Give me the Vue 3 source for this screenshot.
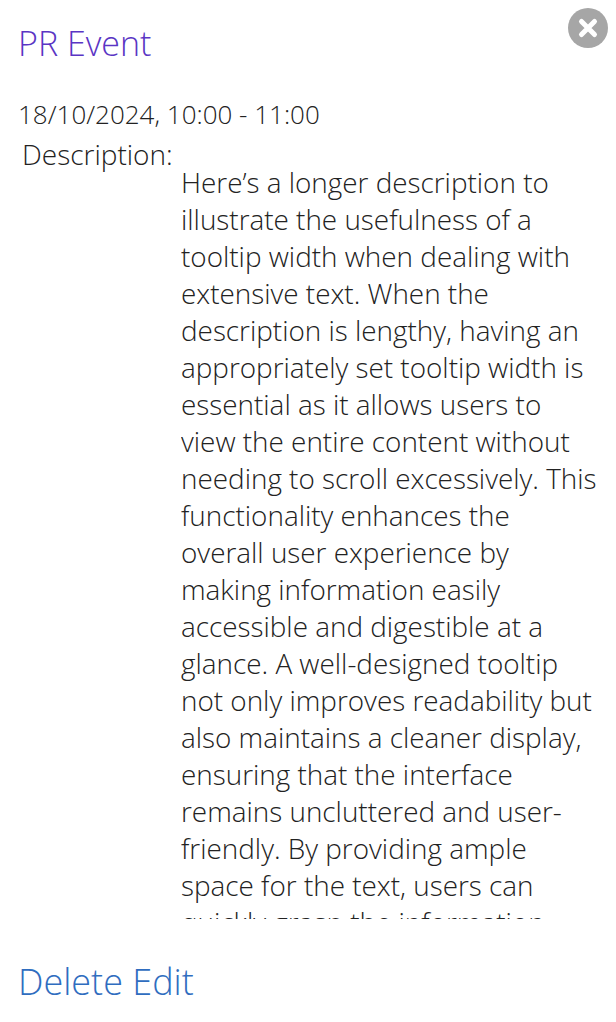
<template>
  <div class="popup">
    <button class="close" aria-label="Close">
      <svg viewBox="0 0 40 40" width="40" height="40">
        <circle cx="20" cy="20" r="20" fill="#a6a6a6" />
        <path d="M13.5 13.5 L26.5 26.5 M26.5 13.5 L13.5 26.5" stroke="#fff" stroke-width="5" stroke-linecap="round" />
      </svg>
    </button>
    <h2 class="title">{{ title }}</h2>
    <div class="when">{{ when }}</div>
    <div class="label">Description:</div>
    <div class="body">
      <p class="text">{{ description }}</p>
    </div>
    <div class="actions"><a>Delete</a> <a>Edit</a></div>
  </div>
</template>

<script setup>
const title = 'PR Event'
const when = '18/10/2024, 10:00 - 11:00'
const description = 'Here’s a longer description to illustrate the usefulness of a tooltip width when dealing with extensive text. When the description is lengthy, having an appropriately set tooltip width is essential as it allows users to view the entire content without needing to scroll excessively. This functionality enhances the overall user experience by making information easily accessible and digestible at a glance. A well-designed tooltip not only improves readability but also maintains a cleaner display, ensuring that the interface remains uncluttered and user-friendly. By providing ample space for the text, users can quickly grasp the information without feeling overwhelmed.'
</script>

<style>
html, body { background: #fff; }
</style>

<style scoped>
.popup {
  position: relative;
  width: 616px;
  height: 1022px;
  box-sizing: border-box;
  padding: 19px 17.5px 0 18px;
  font-family: "Open Sans", "Liberation Sans", sans-serif;
  font-weight: 300;
  color: #222;
  overflow: hidden;
}
.close {
  position: absolute;
  top: 8px;
  left: 568px;
  width: 40px;
  height: 40px;
  padding: 0;
  border: 0;
  background: none;
  filter: blur(0.6px);
}
.close svg { display: block; }
.title {
  margin: 0;
  font-size: 34px;
  line-height: 48px;
  font-weight: 300;
  color: #5a35c4;
}
.when {
  margin-top: 29px;
  font-size: 26px;
  line-height: 36px;
}
.label {
  margin-top: 13px;
  margin-left: 4px;
  font-size: 28px;
  line-height: 19px;
}
.body {
  margin-left: 163px;
  height: 755px;
  overflow: hidden;
}
.text {
  margin: 0;
  font-size: 27.86px;
  line-height: 37px;
}
.actions {
  margin-top: 39px;
  font-size: 36px;
  line-height: 48px;
  color: #2f6dbf;
}
</style>
